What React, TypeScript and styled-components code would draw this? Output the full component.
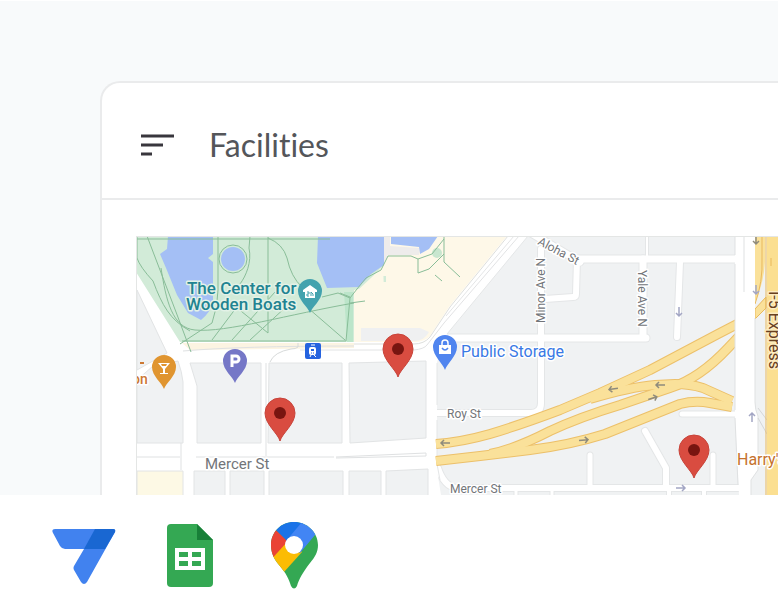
import React from "react";
import styled, { createGlobalStyle } from "styled-components";

const GlobalStyle = createGlobalStyle`
  *, *::before, *::after { box-sizing: border-box; }
  body { margin: 0; background: #ffffff; font-family: Roboto, "Liberation Sans", sans-serif; }
`;

const Page = styled.main`
  overflow: hidden;
`;

const Hero = styled.section`
  padding: 80px 0 0 100px;
  border-top: 1px solid #ffffff;
  background: #f8fafb;
`;

const Card = styled.article`
  border: 2px solid #eaebec;
  border-right: 0;
  border-bottom: 0;
  border-top-left-radius: 20px;
  background: #ffffff;
  overflow: hidden;
`;

const CardHeader = styled.header`
  display: flex;
  align-items: center;
  gap: 33px;
  height: 117px;
  padding: 8px 36px 0;
  border-bottom: 2px solid #eaebec;
`;

const MenuButton = styled.button`
  display: flex;
  padding: 0;
  border: 0;
  background: none;
  cursor: pointer;
`;

const Title = styled.h1`
  margin: 0;
  color: #54565a;
  font-family: Lato, "Open Sans", sans-serif;
  font-size: 32px;
  font-weight: 400;
  font-variant-ligatures: none;
  line-height: 40px;
`;

const CardBody = styled.div`
  padding: 36px 0 0 34px;
`;

const MapView = styled.svg`
  display: block;
  width: 100%;
  height: 259px;
`;

const MapLabel = styled.text<{ $size: number; $color?: string; $weight?: number; $halo?: string }>`
  font-family: Roboto, "Liberation Sans", sans-serif;
  font-size: ${(p) => p.$size}px;
  font-weight: ${(p) => p.$weight ?? 400};
  fill: ${(p) => p.$color ?? "#727579"};
  stroke: ${(p) => p.$halo ?? "#ffffff"};
  stroke-width: 3px;
  stroke-linejoin: round;
  paint-order: stroke;
`;

const Products = styled.footer`
  display: flex;
  align-items: center;
  gap: 50px;
  padding: 26px 52px 20px;
`;

const ProductIcon = styled.svg`
  display: block;
  flex: none;
  height: 68px;
`;

type Road = [path: string, width: number];

const streets: Road[] = [
  ["M526 230 L580 262", 7],
  ["M577 259 H740", 7],
  ["M577 259 L576 294 Q576 297 573 297 L545 299", 6],
  ["M541 249 V403 Q541 413 531 413 H434", 6],
  ["M436 338 H646", 7],
  ["M643 259 V337", 7],
  ["M647 230 V258", 2],
  ["M680 262 L677 337", 6],
  ["M682 414 H740", 5],
  ["M645 431 L666 468 V488", 6],
  ["M590 455 V488", 5],
  ["M713 455 V488", 5],
  ["M438 468 Q444 486 456 488 H742", 6],
  ["M552 490 V500", 3],
  ["M669 490 V500", 4],
  ["M704 490 V500", 4],
  ["M516 490 V500", 3],
];

const highways: Road[] = [
  ["M745 320 L718 334 L650 370 L600 393 L560 410 Q520 425 490 434 Q462 442 436 444", 8],
  ["M745 330 L728 348 Q700 378 670 388 L620 405 Q580 417 550 431 Q515 449 490 454", 8],
  ["M732 401 L703 388 Q690 384 675 384 L655 385 Q630 387 590 399", 8],
  ["M732 407 L710 403 Q695 400 680 404 Q635 422 605 434 Q570 445 530 450 L480 456 L436 461", 8],
];

const blocks = [
  "M137 290 L167 353 L137 370 Z",
  "M137 380 L153 366 L178 361 Q182 372 183 382 V443 H137 Z",
  "M190 363 H261 V443 H197 V386 Z",
  "M269 363 H342 V443 H268 Z",
  "M349 363 L426 361 V438 L350 443 Z",
  "M194 471 H225 V500 H194 Z",
  "M230 471 H264 V500 H230 Z",
  "M269 471 H343 V500 H269 Z",
  "M349 471 H381 V500 H349 Z",
  "M386 471 L428 469 V500 H386 Z",
];

const parkPaths = [
  "M137 239 H330",
  "M137 236 V258 Q140 267 153 281 C162 305 170 320 190 331",
  "M147 236 L176 312 L191 352",
  "M161 268 C166 300 172 328 195 330 C225 333 290 314 354 303",
  "M180 344 L212 323 Q218 306 218 290 V236",
  "M182 341 H346 L350 298",
  "M268 236 V333 L236 307",
  "M212 340 L242 300",
  "M232 340 L275 292",
  "M250 340 L287 306",
  "M268 238 Q283 244 287 258 Q291 277 302 287",
  "M308 308 L345 340",
  "M250 236 L249 248 C252 262 246 276 240 284",
  "M322 297 L338 293 L350 298 L357 289",
  "M350 303 L365 301",
  "M340 293 L350 297",
  "M357 289 L366 278 L381 270 L388 256 H411 L418 259 V273",
  "M444 236 V262 L460 277",
  "M444 254 L429 269 L418 273",
  "M444 239 L432 254 L418 259",
  "M435 275 L442 281",
];

function Pin({ x, y, r, tip, color, edge }: { x: number; y: number; r: number; tip: number; color: string; edge?: string }) {
  return (
    <path
      d={`M${x} ${y + tip} C${x - 2} ${y + tip * 0.73} ${x - r} ${y + r * 0.75} ${x - r} ${y} A${r} ${r} 0 0 1 ${x + r} ${y} C${x + r} ${y + r * 0.75} ${x + 2} ${y + tip * 0.73} ${x} ${y + tip} Z`}
      fill={color}
      stroke={edge ?? "none"}
    />
  );
}

function FacilityPin({ x, y }: { x: number; y: number }) {
  return (
    <g>
      <Pin x={x} y={y} r={15} tip={28} color="#d94c40" edge="#c8443a" />
      <circle cx={x} cy={y} r="6" fill="#781510" />
    </g>
  );
}

function Arrow({ x, y, turn, color = "#8f8b7c" }: { x: number; y: number; turn: number; color?: string }) {
  return (
    <path
      d="M-5 0 H4 M1 -3 L4 0 L1 3"
      transform={`translate(${x} ${y}) rotate(${turn})`}
      fill="none"
      stroke={color}
      strokeWidth="1.5"
    />
  );
}

function FacilitiesMap() {
  return (
    <MapView viewBox="136 236 642 259" preserveAspectRatio="xMinYMin slice" role="img" aria-label="Map of facilities">
      <rect x="136" y="236" width="642" height="259" fill="#f0f2f3" />
      <g fill="none" strokeLinejoin="round" strokeLinecap="round">
        {streets.map(([d, w]) => <path key={d} d={d} stroke="#e4e6e7" strokeWidth={w + 2} />)}
        {streets.map(([d, w]) => <path key={d} d={d} stroke="#ffffff" strokeWidth={w} />)}
      </g>

      <path d="M136 236 H528 L447 334 L437 362 V470 L441 495 H136 Z" fill="#ffffff" />
      <path d="M528 236 L447 334 M437 363 V405 M437 420 V464 L440 480" fill="none" stroke="#e4e6e7" />
      <g fill="#f0f2f3" stroke="#e2e4e5">
        {blocks.map((d) => <path key={d} d={d} />)}
      </g>
      <path d="M137 471 H183 V500 H137 Z" fill="#fdf9e5" stroke="#e2e4e5" />
      <path d="M137 457 H180 M196 457 H334 M336 457 L426 453 V456 L336 458 M181 443 V470 M266 363 V456" fill="none" stroke="#dfe1e2" />

      <path d="M350 236 H507 L449 307 L430 336 Q424 342 414 342 H350 Z" fill="#fef8e8" />
      <path d="M508 236 L450 307 L430 337 Q424 344 414 344 H354" fill="none" stroke="#dedfdc" />
      <path d="M519 236 L444 323 L427 345 Q424 349 414 350 H300" fill="none" stroke="#e2e3e4" />
      <path d="M514 236 L446 316" fill="none" stroke="#e4e5e6" />
      <path d="M182 343 H354 V348 L190 350 Z" fill="#fcf4e2" />
      <path d="M183 351 Q240 346 354 346" fill="none" stroke="#dfe1e2" />
      <path d="M298 343 V347 Q296 349 291 349 Q274 352 270 362" fill="none" stroke="#d7dada" />
      <path d="M361 328 H420 L429 332 Q424 341 414 341 H361 Z" fill="#eff0f1" />

      <path d="M136 236 H383 V284 L354 290 V342 H180 L136 272 Z" fill="#d2ebd8" />
      <path d="M354 282 H386 V276 L372 276 L354 290 Z" fill="#d2ebd8" />
      <path d="M383 266 L372 277 L358 290 H384 Z" fill="#fef8e8" />
      <path d="M344 292 H353 V342 H347 Z" fill="#bce5ca" />
      <circle cx="437" cy="253" r="5" fill="#c8e6cf" />
      <g fill="#a4bff5">
        <path d="M168 236 H213 V254 L208 258 L213 262 V302 Q210 313 201 320 L188 313 L177 295 L166 268 L160 254 L167 249 Z" />
        <circle cx="233" cy="259" r="12" />
        <path d="M318 236 H384 V265 L371 274 L359 287 L327 288 L317 263 Z" />
        <path d="M391 236 H438 L429 249 L420 254 L419 247 L391 244 Z" />
      </g>
      <path d="M384 236 H390 V246 L419 248 V255 H388 L384 263 Z" fill="#eeeceb" />
      <g fill="none" stroke="#89bd98" strokeWidth="1">
        <circle cx="233" cy="259" r="14" />
        {parkPaths.map((d) => <path key={d} d={d} />)}
      </g>

      <g fill="none" strokeLinejoin="round">
        {highways.map(([d, w]) => <path key={d} d={d} stroke="#ecc06a" strokeWidth={w + 2} />)}
        {highways.map(([d, w]) => <path key={d} d={d} stroke="#fae19a" strokeWidth={w} />)}
      </g>

      <path d="M755 236 H765 V262 Q764 282 755 302 Z" fill="#fae19a" />
      <path d="M762 236 V258 Q763 282 755 304" fill="none" stroke="#e9b95c" />
      <path d="M766 297 L755 309 V319 L766 308 Z" fill="#fae19a" stroke="#e9b95c" />
      <path d="M735 236 H755 V402 Q755 410 758 416 V470 L751 480 V495 H739 L735 416 Z" fill="#ffffff" />
      <path d="M735 236 V255 M735 264 V410 M735 418 L738 485 M744 236 V292 M755 318 V402 Q755 410 758 416 V470 L751 480 V495" fill="none" stroke="#dfe1e2" />
      <path d="M758 408 L767 420 M758 418 L767 434" stroke="#d4d6d8" />
      <rect x="767" y="236" width="12" height="259" fill="#fbdf91" />
      <path d="M766 236 V495 M771 258 V266" stroke="#e9b95c" />

      <Arrow x={445} y={443} turn={180} />
      <Arrow x={613} y={389} turn={172} />
      <Arrow x={660} y={385} turn={180} />
      <Arrow x={653} y={398} turn={-18} />
      <Arrow x={584} y={440} turn={-5} />
      <Arrow x={681} y={488} turn={0} color="#a3a6c4" />
      <Arrow x={679} y={312} turn={90} color="#a3a6c4" />
      <Arrow x={756} y={290} turn={90} color="#a3a6c4" />
      <Arrow x={756} y={240} turn={90} />
      <Arrow x={752} y={417} turn={-90} color="#a3a6c4" />

      <MapLabel $size={12} x="-323" y="545" transform="rotate(-90)">Minor Ave N</MapLabel>
      <MapLabel $size={12} transform="translate(638 270) rotate(90)">Yale Ave N</MapLabel>
      <MapLabel $size={12} transform="translate(537 244) rotate(28)">Aloha St</MapLabel>
      <MapLabel $size={15} x="205" y="469">Mercer St</MapLabel>
      <MapLabel $size={12} x="447" y="418">Roy St</MapLabel>
      <MapLabel $size={12} x="450" y="493">Mercer St</MapLabel>
      <MapLabel $size={16} $color="#68401f" $halo="#fdecc0" transform="translate(769 291) rotate(90)">I-5 Express</MapLabel>
      <MapLabel $size={17} $weight={500} $color="#218391" $halo="#e3f2e7" x="187" y="294">The Center for</MapLabel>
      <MapLabel $size={17} $weight={500} $color="#218391" $halo="#e3f2e7" x="186" y="310">Wooden Boats</MapLabel>
      <MapLabel $size={16} $color="#3979e5" x="461" y="357">Public Storage</MapLabel>
      <MapLabel $size={16} $color="#c5722d" x="737" y="465">Harry's</MapLabel>
      <MapLabel $size={14} $weight={500} $color="#cc7833" x="132" y="384">on</MapLabel>
      <path d="M140 363 H144" stroke="#cc7833" strokeWidth="2" />

      <Pin x={310} y={291} r={12} tip={22} color="#43a2ae" />
      <path d="M303 290 L310 285 L317 290 V292 H315 V298 H305 V292 H303 Z" fill="#ffffff" />
      <path d="M307 292 H309 V294 H307 V296 H309 M311 296 V292 L313 294 V296" fill="none" stroke="#43a2ae" />

      <Pin x={235} y={361} r={12} tip={22} color="#7577c7" />
      <path d="M232 367 V356 H236 A3 3 0 0 1 236 362 H232" fill="none" stroke="#ffffff" strokeWidth="3" />

      <Pin x={164} y={367} r={12} tip={22} color="#e09530" />
      <path d="M158 363 H170 L165 369 V373 H168 V374 H160 V373 H163 V369 Z" fill="#ffffff" />
      <path d="M161 364 H167 L166 366 H162 Z" fill="#e09530" />

      <Pin x={445} y={347} r={12} tip={23} color="#5085ef" />
      <path d="M439 345 H451 V354 H439 Z" fill="#ffffff" />
      <path d="M442 346 V343 A3 3 0 0 1 448 343 V346" fill="none" stroke="#ffffff" strokeWidth="1.5" />
      <path d="M442 348 Q445 352 448 348" fill="none" stroke="#5085ef" strokeWidth="1.5" />

      <rect x="305" y="343" width="16" height="16" rx="2" fill="#2563df" />
      <rect x="309" y="347" width="7" height="8" rx="2" fill="#ffffff" />
      <path d="M311 345 H315 M310 357 L311 355 M316 357 L314 355" stroke="#ffffff" />
      <path d="M311 349 H314 V351 H311 Z" fill="#2563df" />
      <path d="M311 353 H314" stroke="#2563df" strokeDasharray="1 1" />

      <FacilityPin x={398} y={349} />
      <FacilityPin x={280} y={413} />
      <FacilityPin x={694} y={450} />
      <path d="M136 236 H778" stroke="#e4e6e5" strokeWidth="2" />
      <path d="M136 236 V495" stroke="#e4e6e5" strokeWidth="2" />
    </MapView>
  );
}

export default function App() {
  return (
    <>
      <GlobalStyle />
      <Page>
        <Hero>
          <Card>
            <CardHeader>
              <MenuButton type="button" aria-label="Menu">
                <svg width="38" height="24" viewBox="138 133 38 24" aria-hidden="true">
                  <path d="M141 136 H174 M141 145 H163 M141 154 H152" stroke="#38363d" strokeWidth="3" />
                </svg>
              </MenuButton>
              <Title>Facilities</Title>
            </CardHeader>
            <CardBody>
              <FacilitiesMap />
            </CardBody>
          </Card>
        </Hero>
        <Products>
          <ProductIcon width="65" viewBox="52 521 65 68" role="img" aria-label="AppSheet">
            <path d="M55 529 H113 Q116 529 115 532 L87 582 Q84 586 81 582 L74 570 Q73 568 74 566 L84 549 H65 Q62 549 60 546 L53 533 Q51 529 55 529 Z" fill="#4182ef" />
            <path d="M95 529 H113 Q116 529 115 532 L105 549 H84 Z" fill="#1967d2" />
          </ProductIcon>
          <ProductIcon width="47" viewBox="167 521 47 68" role="img" aria-label="Google Sheets">
            <path d="M171 524 H197 L213 540 V583 Q213 587 209 587 H171 Q167 587 167 583 V528 Q167 524 171 524 Z" fill="#34a853" />
            <path d="M197 524 L213 540 H197 Z" fill="#188038" />
            <path d="M175 548 H205 V570 H175 Z M179 552 V557 H188 V552 Z M192 552 V557 H201 V552 Z M179 561 V566 H188 V561 Z M192 561 V566 H201 V561 Z" fill="#ffffff" fillRule="evenodd" />
          </ProductIcon>
          <ProductIcon width="60" viewBox="264 521 60 68" role="img" aria-label="Google Maps">
            <clipPath id="maps-pin">
              <path d="M294 522 C281 522 271 532 271 545 C271 553 274 559 279 565 C286 573 289 579 291 586 Q294 591 297 586 C299 579 303 572 310 563 C315 557 318 552 318 545 C318 532 307 522 294 522 Z" />
            </clipPath>
            <g clipPath="url(#maps-pin)">
              <path d="M264 521 H324 V590 H264 Z" fill="#34a853" />
              <path d="M264 567 L287 540 L294 545 L302 552 L284 572 L264 590 Z" fill="#fbbc04" />
              <path d="M264 521 L277 531 L288 541 L268 563 L264 565 Z" fill="#ea4335" />
              <path d="M277 531 L268 520 H306 L287 541 Z" fill="#1a73e8" />
              <path d="M302 522 L324 520 V528 L315 535 L300 553 L286 541 Z" fill="#4285f4" />
            </g>
            <circle cx="294" cy="545" r="9" fill="#ffffff" />
          </ProductIcon>
        </Products>
      </Page>
    </>
  );
}
